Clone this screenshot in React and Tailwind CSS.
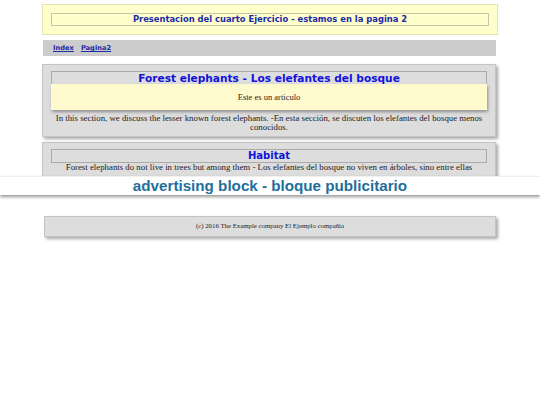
export default function App() {
  const serif = { fontFamily: '"Liberation Serif", "Times New Roman", serif' };
  return (
    <div className="relative min-h-[405px] w-[540px] bg-white" style={serif}>
      <header className="mx-[42px] mt-[4px] h-[31px] border border-[#e6e2b0] bg-[#ffffcc] px-[8px] pt-[8px]">
        <h1 className="flex h-[13px] items-center justify-center border border-[#c9c6a8] font-['DejaVu_Sans',sans-serif] text-[8.4px] font-bold leading-none text-[#1c2aa6]">
          Presentacion del cuarto Ejercicio - estamos en la pagina 2
        </h1>
      </header>

      <nav className="ml-[43px] mt-[5px] flex h-[16px] w-[453px] items-center gap-[7px] bg-[#cccccc] pl-[10px] font-['DejaVu_Sans',sans-serif] text-[6.7px] font-bold text-[#1c2aa6]">
        <a href="#" className="underline">Index</a>
        <a href="#" className="underline">Pagina2</a>
      </nav>

      <section className="ml-[42px] mt-[8px] w-[454px] border border-[#c4c4c4] bg-[#dddddd] px-[8px] pb-[4px] pt-[6px] shadow-[2px_2px_3px_rgba(0,0,0,0.35)]">
        <h2 className="flex h-[13px] items-center justify-center border border-b-0 border-[#aaaaaa] font-['DejaVu_Sans',sans-serif] text-[10.6px] font-bold leading-none text-[#1212d8]">
          Forest elephants - Los elefantes del bosque
        </h2>
        <article className="flex h-[26px] items-center justify-center bg-[#fffacd] text-[8.5px] text-[#222] shadow-[1px_2px_3px_rgba(0,0,0,0.35)]">
          Este es un articulo
        </article>
        <p className="mt-[4px] px-[4px] text-center text-[8.8px] leading-[9px] text-[#222]">
          In this section, we discuss the lesser known forest elephants. -En esta sección, se discuten los elefantes del bosque menos conocidos.
        </p>
      </section>

      <section className="ml-[42px] mt-[5px] h-[35px] w-[454px] border border-[#c4c4c4] bg-[#dddddd] px-[8px] pt-[6px] shadow-[2px_2px_3px_rgba(0,0,0,0.35)]">
        <h2 className="flex h-[14px] items-center justify-center border border-[#aaaaaa] font-['DejaVu_Sans',sans-serif] text-[10px] font-bold leading-none text-[#1212d8]">
          Habitat
        </h2>
        <p className="text-center text-[8.8px] leading-[9px] text-[#222]">
          Forest elephants do not live in trees but among them - Los elefantes del bosque no viven en árboles, sino entre ellas
        </p>
      </section>

      <aside className="relative z-10 -mt-[1px] flex h-[19px] w-full items-center justify-center border-t border-[#f0f0f0] bg-white font-['Liberation_Sans',Arial,sans-serif] text-[15.2px] font-bold leading-none text-[#1f6f9c] shadow-[0_2px_3px_rgba(0,0,0,0.4)]">
        advertising block - bloque publicitario
      </aside>

      <footer className="ml-[44px] mt-[21px] flex h-[21px] w-[452px] items-center justify-center border border-[#c4c4c4] bg-[#dddddd] text-[6.8px] text-[#222] shadow-[2px_2px_3px_rgba(0,0,0,0.35)]">
        (c) 2016 The Example company El Ejemplo compañia
      </footer>
    </div>
  );
}
